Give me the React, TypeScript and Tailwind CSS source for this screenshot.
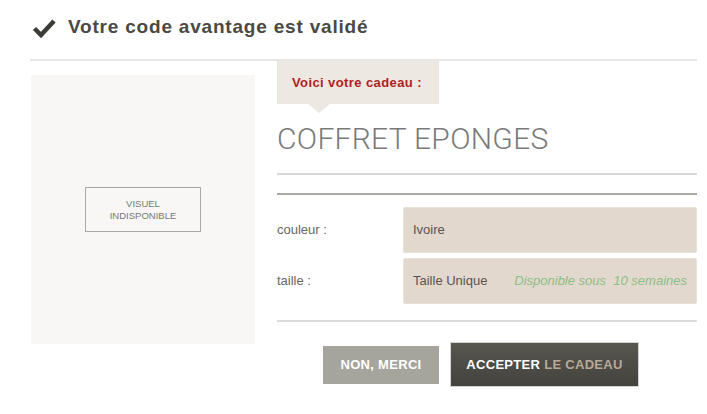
export default function App() {
  return (
    <main className="h-[414px] w-[707px] overflow-hidden bg-white pl-[30px] pr-[10px] font-['Liberation_Sans',Arial,sans-serif]">
      <header className="flex h-[59px] items-start gap-[12px] pt-[17px] pl-[2px]">
        <svg width="24" height="20" viewBox="0 0 24 20" className="mt-[1px]">
          <polyline
            points="2.5,10.5 9,17 22,3"
            fill="none"
            stroke="#3c3b38"
            strokeWidth="4.5"
            strokeLinecap="butt"
            strokeLinejoin="miter"
          />
        </svg>
        <h1 className="text-[19px] font-bold leading-[20px] tracking-[0.8px] text-[#4a4944]">
          Votre code avantage est validé
        </h1>
      </header>
      <div className="h-[2px] bg-[#e6e6e6]" />

      <div className="flex gap-[22px]">
        <div className="ml-px mt-[14px] flex h-[269px] w-[224px] items-center justify-center bg-[#f8f7f5]">
          <div className="flex h-[45px] w-[116px] flex-col items-center justify-center border border-[#a9a9a9] text-center text-[9.5px] leading-[12px] text-[#777]">
            <span>VISUEL</span>
            <span>INDISPONIBLE</span>
          </div>
        </div>

        <section className="flex w-[420px] flex-col">
          <div className="relative flex h-[43px] w-[162px] items-center bg-[#ede8e1] pl-[15px]">
            <p className="text-[13px] font-bold tracking-[0.4px] text-[#b01e23]">
              Voici votre cadeau :
            </p>
            <span className="absolute left-[31px] top-[43px] h-0 w-0 border-x-[11px] border-t-[9px] border-x-transparent border-t-[#ede8e1]" />
          </div>

          <h2 className="mt-[20px] font-['Roboto',Arial,sans-serif] text-[30px] font-light leading-[30px] tracking-[0.3px] text-[#7a7a7a]">
            COFFRET EPONGES
          </h2>

          <div className="mt-[19px] h-[2px] bg-[#d8d8d8]" />
          <div className="mt-[18px] h-[2px] bg-[#aaa9a5]" />

          <div className="mt-[12px] flex flex-col gap-[5px]">
            <div className="flex items-center">
              <span className="w-[126px] text-[13px] text-[#666]">couleur :</span>
              <div className="flex h-[46px] flex-1 items-center rounded-[2px] border border-[#e9e2da] bg-[#e2d8ce] px-[9px] text-[13px] text-[#555]">
                Ivoire
              </div>
            </div>
            <div className="flex items-center">
              <span className="w-[126px] text-[13px] text-[#666]">taille :</span>
              <div className="flex h-[46px] flex-1 items-center justify-between rounded-[2px] border border-[#e9e2da] bg-[#e2d8ce] px-[9px] text-[13px] text-[#555]">
                <span>Taille Unique</span>
                <span className="italic text-[#8cbf84]">Disponible sous&nbsp; 10 semaines</span>
              </div>
            </div>
          </div>

          <div className="mt-[16px] h-[2px] bg-[#dcdcdc]" />

          <div className="mt-[20px] flex items-center gap-[11px] pl-[46px]">
            <button className="h-[38px] w-[116px] bg-[#a5a49d] text-[13px] font-bold tracking-[0.3px] text-white">
              NON, MERCI
            </button>
            <button className="h-[45px] w-[189px] border border-[#d4d4d0] bg-gradient-to-b from-[#57564f] to-[#43423d] text-[13px] font-bold tracking-[0.3px] text-white">
              ACCEPTER <span className="text-[#b8aa98]">LE CADEAU</span>
            </button>
          </div>
        </section>
      </div>
    </main>
  );
}
